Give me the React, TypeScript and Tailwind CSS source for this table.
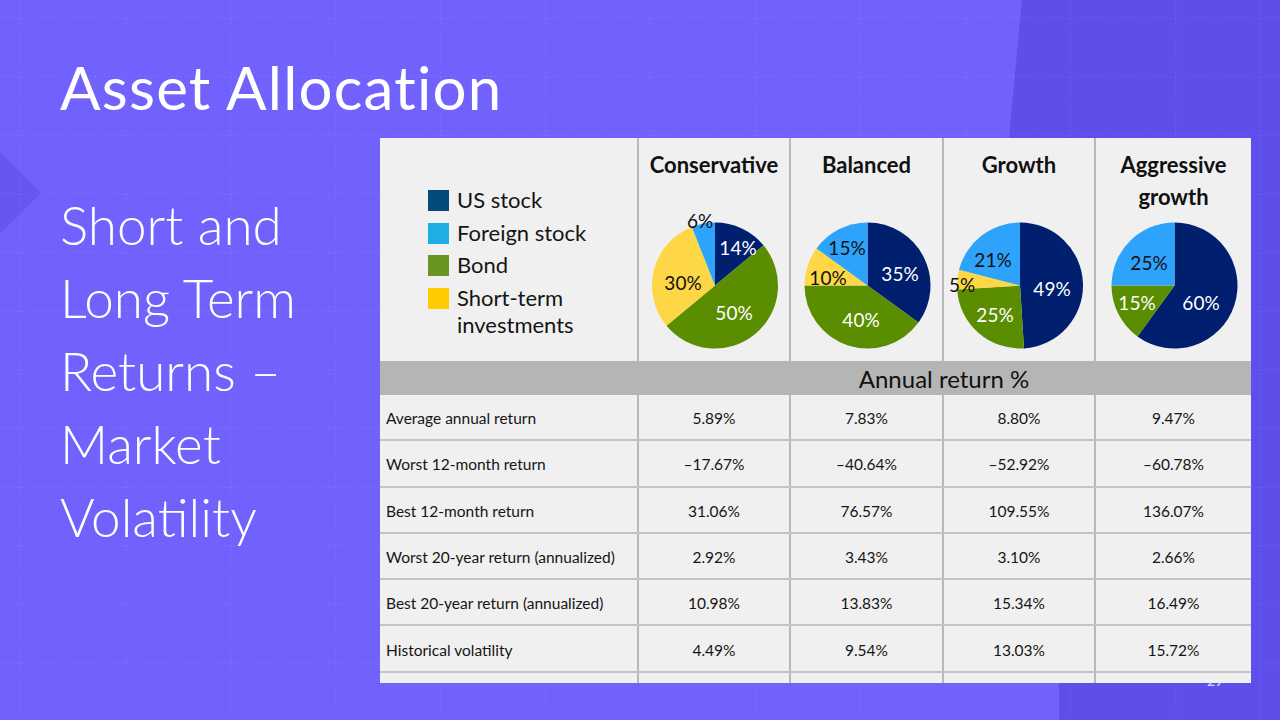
import React from "react";

const PIE = {
  us: "#00206f",
  foreign: "#2ea3fb",
  bond: "#5b8d00",
  short: "#fdd745",
};

const LEGEND = [
  { label: "US stock", color: "#024a7a" },
  { label: "Foreign stock", color: "#1eaee5" },
  { label: "Bond", color: "#6b9523" },
  { label: "Short-term\ninvestments", color: "#ffcc00" },
];

type Slice = { color: string; pct: number };
type Label = { text: string; x: number; y: number; white?: boolean };

const COLUMNS: { title: string[]; width: number; slices: Slice[]; labels: Label[] }[] = [
  {
    title: ["Conservative"],
    width: 152,
    slices: [
      { color: PIE.us, pct: 14 },
      { color: PIE.bond, pct: 50 },
      { color: PIE.short, pct: 30 },
      { color: PIE.foreign, pct: 6 },
    ],
    labels: [
      { text: "6%", x: 61, y: 7 },
      { text: "14%", x: 99, y: 34, white: true },
      { text: "30%", x: 44, y: 69 },
      { text: "50%", x: 95, y: 99, white: true },
    ],
  },
  {
    title: ["Balanced"],
    width: 153,
    slices: [
      { color: PIE.us, pct: 35 },
      { color: PIE.bond, pct: 40 },
      { color: PIE.short, pct: 10 },
      { color: PIE.foreign, pct: 15 },
    ],
    labels: [
      { text: "15%", x: 56, y: 34 },
      { text: "35%", x: 109, y: 60, white: true },
      { text: "10%", x: 37, y: 64 },
      { text: "40%", x: 70, y: 106, white: true },
    ],
  },
  {
    title: ["Growth"],
    width: 152,
    slices: [
      { color: PIE.us, pct: 49 },
      { color: PIE.bond, pct: 25 },
      { color: PIE.short, pct: 5 },
      { color: PIE.foreign, pct: 21 },
    ],
    labels: [
      { text: "21%", x: 49, y: 46 },
      { text: "5%", x: 18, y: 71 },
      { text: "49%", x: 108, y: 75, white: true },
      { text: "25%", x: 51, y: 101, white: true },
    ],
  },
  {
    title: ["Aggressive", "growth"],
    width: 157,
    slices: [
      { color: PIE.us, pct: 60 },
      { color: PIE.bond, pct: 15 },
      { color: PIE.foreign, pct: 25 },
    ],
    labels: [
      { text: "25%", x: 53, y: 49 },
      { text: "15%", x: 41, y: 89, white: true },
      { text: "60%", x: 105, y: 89, white: true },
    ],
  },
];

const ROWS = [
  ["Average annual return", "5.89%", "7.83%", "8.80%", "9.47%"],
  ["Worst 12-month return", "–17.67%", "–40.64%", "–52.92%", "–60.78%"],
  ["Best 12-month return", "31.06%", "76.57%", "109.55%", "136.07%"],
  ["Worst 20-year return (annualized)", "2.92%", "3.43%", "3.10%", "2.66%"],
  ["Best 20-year return (annualized)", "10.98%", "13.83%", "15.34%", "16.49%"],
  ["Historical volatility", "4.49%", "9.54%", "13.03%", "15.72%"],
];

const GRID = "grid grid-cols-[257px_152px_153px_152px_157px]";

function point(cx: number, cy: number, r: number, turn: number) {
  const a = turn * Math.PI * 2;
  return [cx + r * Math.sin(a), cy - r * Math.cos(a)];
}

function Pie({ width, slices, labels }: { width: number; slices: Slice[]; labels: Label[] }) {
  const cx = width / 2 + 1;
  const cy = 72.5;
  const r = 63;
  let start = 0;
  return (
    <svg width={width} height={149} viewBox={`0 0 ${width} 149`} className="overflow-visible">
      {slices.map((s, i) => {
        const end = start + s.pct / 100;
        const [x0, y0] = point(cx, cy, r, start);
        const [x1, y1] = point(cx, cy, r, end);
        const large = end - start > 0.5 ? 1 : 0;
        start = end;
        return (
          <path
            key={i}
            d={`M${cx} ${cy} L${x0} ${y0} A${r} ${r} 0 ${large} 1 ${x1} ${y1} Z`}
            fill={s.color}
          />
        );
      })}
      {labels.map((l) => (
        <text
          key={l.text + l.x}
          x={l.x}
          y={l.y}
          textAnchor="middle"
          dominantBaseline="central"
          fontSize={19}
          fill={l.white ? "#ffffff" : "#111111"}
          fontFamily="Lato, sans-serif"
        >
          {l.text}
        </text>
      ))}
    </svg>
  );
}

function BackgroundGrid() {
  const xs = Array.from({ length: 12 }, (_, i) => 20.7 + i * 105).concat([1260]);
  const ys = Array.from({ length: 12 }, (_, i) => 17.7 + i * 58.7);
  return (
    <svg className="absolute inset-0" width={1280} height={720}>
      {xs.map((x) => (
        <line key={"x" + x} x1={x} y1={0} x2={x} y2={720} stroke="rgba(255,255,255,0.08)" strokeWidth={1.5} strokeDasharray="1.5 3" />
      ))}
      {ys.map((y) => (
        <line key={"y" + y} x1={0} y1={y} x2={1280} y2={y} stroke="rgba(255,255,255,0.08)" strokeWidth={1.5} strokeDasharray="1.5 3" />
      ))}
    </svg>
  );
}

function ReturnsTable() {
  return (
    <div className="w-[871px] bg-[#f0f0f0] text-[#151515]">
      {/* header: legend + pies */}
      <div className={`${GRID} h-[223px]`}>
        <div className="pl-[48px] pt-[48px] flex flex-col gap-[5.5px]">
          {LEGEND.map((item) => (
            <div key={item.label} className="flex items-start gap-[8px]">
              <span className="w-[21px] h-[21px] mt-[4px] shrink-0" style={{ background: item.color }} />
              <span className="text-[22px] leading-[27px] whitespace-pre-line">{item.label}</span>
            </div>
          ))}
        </div>
        {COLUMNS.map((col) => (
          <div key={col.title[0]} className="border-l-2 border-[#b9b9b9] flex flex-col items-center">
            <div className="pt-[11px] text-[22px] leading-[32px] font-bold text-center text-[#111]">
              {col.title.map((t) => (
                <div key={t}>{t}</div>
              ))}
            </div>
            <div className="mt-auto">
              <Pie width={col.width - 2} slices={col.slices} labels={col.labels} />
            </div>
          </div>
        ))}
      </div>

      {/* band */}
      <div className={`${GRID} h-[34px] bg-[#b5b5b5]`}>
        <div />
        <div className="col-span-4 flex items-center justify-center text-[24px] text-[#111]">Annual return %</div>
      </div>

      {ROWS.map((row) => (
        <div key={row[0]} className={`${GRID} h-[46.3px] border-b-2 border-[#c4c4c4]`}>
          {row.map((cell, i) => (
            <div
              key={i}
              className={
                i === 0
                  ? "flex items-center pl-[6px] pt-[3px] text-[15.5px]"
                  : "flex items-center justify-center pt-[3px] border-l-2 border-[#b9b9b9] text-[15.5px]"
              }
            >
              {cell}
            </div>
          ))}
        </div>
      ))}
      <div className={`${GRID} h-[10px]`}>
        <div />
        <div className="border-l-2 border-[#b9b9b9]" />
        <div className="border-l-2 border-[#b9b9b9]" />
        <div className="border-l-2 border-[#b9b9b9]" />
        <div className="border-l-2 border-[#b9b9b9]" />
      </div>
    </div>
  );
}

export default function App() {
  return (
    <div className="relative w-[1280px] h-[720px] overflow-hidden bg-[#7262fd] font-['Lato',sans-serif]">
      <div className="absolute inset-0 bg-[#5e4fea] [clip-path:polygon(1022px_0,1280px_0,1280px_720px,1059px_720px,1059px_683px,1009px_137px)]" />
      <div className="absolute inset-0 bg-[#6757f2] [clip-path:polygon(0_152px,41px_193px,0_234px)]" />
      <BackgroundGrid />
      <span className="absolute left-[1207px] top-[670px] text-[14px] text-white/80">29</span>

      <div className="relative z-10 flex flex-col pl-[60px]">
        <h1 className="h-[138px] pt-[52px] text-[60px] leading-[70px] font-normal text-white tracking-[0.02em]">
          Asset Allocation
        </h1>
        <div className="flex">
          <div className="w-[320px] pt-[50px] text-[53px] leading-[73px] font-light text-white">
            Short and
            <br />
            Long Term
            <br />
            Returns –
            <br />
            Market
            <br />
            Volatility
          </div>
          <ReturnsTable />
        </div>
      </div>
    </div>
  );
}
